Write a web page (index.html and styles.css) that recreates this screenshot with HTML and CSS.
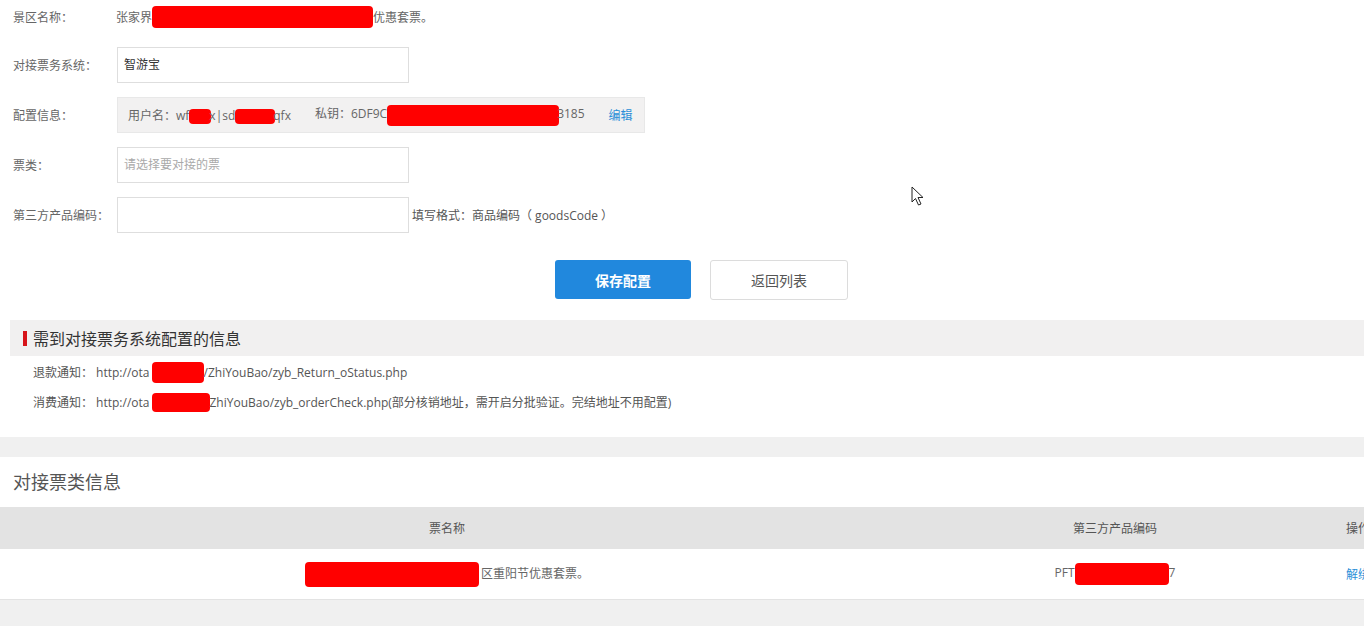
FILE: index.html
```html
<!DOCTYPE html>
<html lang="zh-CN">
<head>
    <meta charset="UTF-8">
    <meta name="viewport" content="width=device-width, initial-scale=1.0">
    <title>票务系统配置</title>
    <link rel="stylesheet" href="styles.css">
</head>
<body>
<div class="page">

    <div class="panel form-panel">
        <div class="form-row">
            <span class="form-label">景区名称：</span>
            <div class="form-text">张家界<span class="mask mask-title"></span>优惠套票。</div>
        </div>
        <div class="form-row">
            <span class="form-label">对接票务系统：</span>
            <div class="form-input filled">智游宝</div>
        </div>
        <div class="form-row">
            <span class="form-label">配置信息：</span>
            <div class="config-box">
                <span>用户名：wf<span class="mask mask-s1"></span>x|sd<span class="mask mask-s2"></span>qfx</span>
                <span class="config-key">私钥：6DF9C<span class="mask mask-key"></span>3185</span>
                <a class="link edit-link" href="#">编辑</a>
            </div>
        </div>
        <div class="form-row">
            <span class="form-label">票类：</span>
            <div class="form-input placeholder">请选择要对接的票</div>
        </div>
        <div class="form-row">
            <span class="form-label">第三方产品编码：</span>
            <div class="form-input"></div>
            <span class="form-hint">填写格式：商品编码（ goodsCode ）</span>
        </div>

        <div class="actions">
            <button class="btn btn-primary">保存配置</button>
            <button class="btn btn-default">返回列表</button>
        </div>

        <div class="notice">
            <h3 class="notice-title">需到对接票务系统配置的信息</h3>
            <p class="notice-line">退款通知： http://ota<span class="mask mask-url1"></span>/ZhiYouBao/zyb_Return_oStatus.php</p>
            <p class="notice-line">消费通知： http://ota<span class="mask mask-url2"></span>ZhiYouBao/zyb_orderCheck.php(部分核销地址，需开启分批验证。完结地址不用配置)</p>
        </div>
    </div>

    <div class="panel table-panel">
        <h2 class="panel-title">对接票类信息</h2>
        <table class="ticket-table">
            <thead>
                <tr>
                    <th class="col-name">票名称</th>
                    <th class="col-code">第三方产品编码</th>
                    <th class="col-op">操作</th>
                </tr>
            </thead>
            <tbody>
                <tr>
                    <td class="col-name"><span class="mask mask-ticket"></span>区重阳节优惠套票。</td>
                    <td class="col-code">PFT<span class="mask mask-code"></span>7</td>
                    <td class="col-op"><a class="link" href="#">解绑</a></td>
                </tr>
            </tbody>
        </table>
    </div>

</div>

<svg class="cursor" width="14" height="22" viewBox="0 0 14 22">
    <path d="M1 1 L1 16 L4.5 12.5 L7.5 19 L10 18 L7 11.5 L12 11.5 Z" fill="#fff" stroke="#222" stroke-width="1"/>
</svg>
</body>
</html>
```

FILE: styles.css
```css
body {
    margin: 0;
    overflow: hidden;
    background-color: #f0f0f0;
    font-family: "Open Sans", "Noto Sans CJK SC", sans-serif;
    font-size: 12px;
    color: #666;
}

.page {
    width: 1403px;
}

.panel {
    background-color: #fff;
}

/* 表单 */
.form-panel {
    padding-bottom: 20px;
    margin-bottom: 20px;
}

.form-row {
    display: flex;
    align-items: center;
    height: 36px;
    margin-bottom: 14px;
}

.form-row:first-child {
    height: 33px;
}

.form-label {
    width: 104px;
    padding-left: 13px;
    flex-shrink: 0;
}

.form-text {
    display: flex;
    align-items: center;
    margin-left: -1px;
}

.form-input {
    box-sizing: border-box;
    width: 292px;
    height: 36px;
    line-height: 34px;
    border: 1px solid #dedede;
    padding-left: 6px;
}

.form-input.filled {
    color: #333;
}

.form-input.placeholder {
    color: #a9a9a9;
}

.form-hint {
    margin-left: 3px;
    color: #555;
}

.config-box {
    box-sizing: border-box;
    width: 528px;
    height: 36px;
    display: flex;
    align-items: center;
    padding-left: 10px;
    background-color: #f2f1f1;
    border: 1px solid #e8e8e8;
}

.config-key {
    margin-left: 24px;
}

.edit-link {
    margin-left: 24px;
}

.link {
    color: #2a8fd8;
    text-decoration: none;
}

/* 打码 */
.mask {
    display: inline-block;
    vertical-align: middle;
    background-color: #ff0000;
    border-radius: 4px;
}

.mask-title { width: 221px; height: 22px; }
.mask-s1 { width: 22px; height: 15px; margin-right: -2px; }
.mask-s2 { width: 40px; height: 15px; margin-right: -2px; }
.mask-key { width: 172px; height: 21px; margin-right: -2px; }
.mask-url1 { width: 52px; height: 21px; margin-left: 2px; }
.mask-url2 { width: 58px; height: 19px; margin-left: 2px; }
.mask-ticket { width: 174px; height: 25px; margin-right: 2px; }
.mask-code { width: 94px; height: 22px; }

/* 按钮 */
.actions {
    display: flex;
    justify-content: center;
    gap: 19px;
    margin-top: 27px;
}

.btn {
    height: 40px;
    font-family: inherit;
    font-size: 14px;
    border-radius: 3px;
    cursor: pointer;
}

.btn-primary {
    width: 136px;
    height: 39px;
    background-color: #2188dd;
    border: none;
    color: #fff;
    font-weight: bold;
}

.btn-default {
    width: 138px;
    background-color: #fff;
    border: 1px solid #dcdcdc;
    color: #555;
}

/* 说明 */
.notice {
    margin: 20px 0 0 10px;
}

.notice-title {
    margin: 0;
    height: 36px;
    display: flex;
    align-items: center;
    background-color: #f1f0f0;
    font-size: 16px;
    font-weight: normal;
    color: #333;
}

.notice-title::before {
    content: "";
    width: 4px;
    height: 15px;
    margin: 0 6px 0 13px;
    background-color: #d7141a;
}

.notice-line {
    margin: 0;
    padding-left: 23px;
    height: 30px;
    display: flex;
    align-items: center;
    color: #555;
}

.notice-line:first-of-type {
    margin-top: 1px;
}

/* 表格 */
.panel-title {
    margin: 0;
    padding: 14px 13px 14px;
    font-size: 18px;
    line-height: 22px;
    font-weight: normal;
    color: #555;
}

.ticket-table {
    width: 100%;
    border-collapse: collapse;
}

.ticket-table th {
    height: 42px;
    background-color: #e3e3e3;
    font-weight: normal;
    color: #555;
    padding: 0;
}

.ticket-table td {
    height: 50px;
    border-bottom: 1px solid #e3e3e3;
    padding: 0;
}

.col-name {
    width: 894px;
    text-align: center;
}

.col-code {
    width: 442px;
    text-align: center;
}

.col-op {
    text-align: left;
    padding-left: 10px !important;
}

.cursor {
    position: absolute;
    left: 911px;
    top: 186px;
}
```
